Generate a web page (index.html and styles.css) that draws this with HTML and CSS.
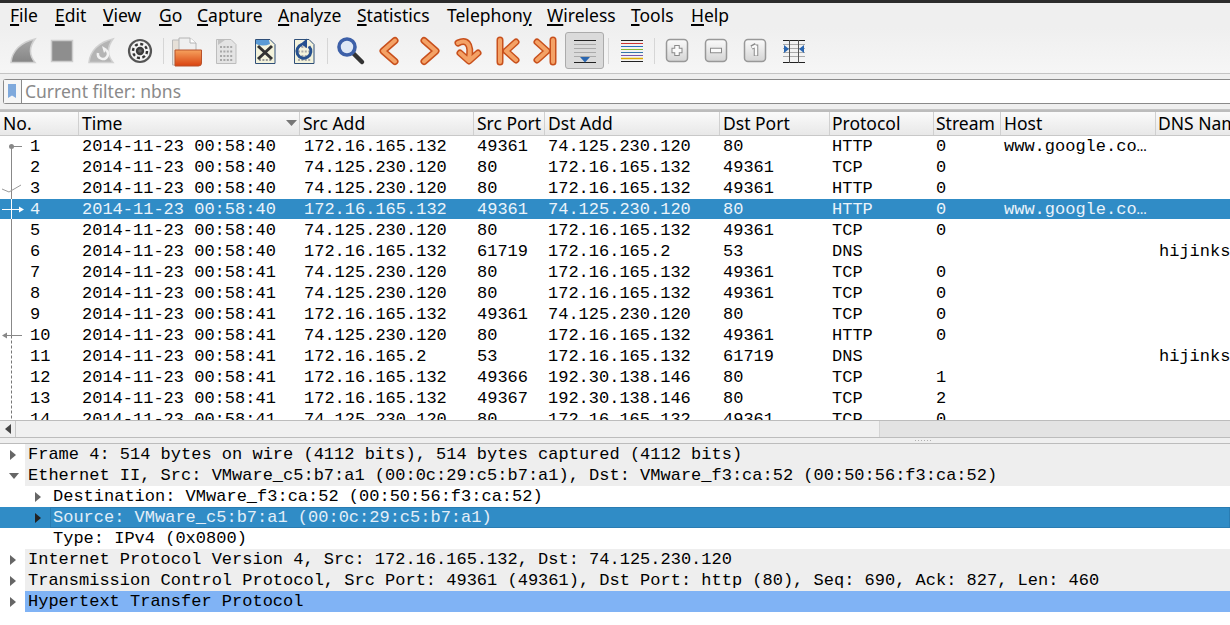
FILE: index.html
```html
<!DOCTYPE html>
<html lang="en">
<head>
<meta charset="utf-8">
<title>Wireshark</title>
<link rel="stylesheet" href="styles.css">
</head>
<body>
<svg class="defs">
	<defs>
		<linearGradient id="finfill" x1="0" y1="0" x2="0" y2="1"><stop offset="0" stop-color="#a8a8a8"/><stop offset="1" stop-color="#858585"/></linearGradient>
		<linearGradient id="folderfill" x1="0" y1="0" x2="0" y2="1"><stop offset="0" stop-color="#f6a25e"/><stop offset="1" stop-color="#d9420f"/></linearGradient>
		<linearGradient id="keyfill" x1="0" y1="0" x2="0" y2="1"><stop offset="0" stop-color="#fbfbfb"/><stop offset="1" stop-color="#d4d4d4"/></linearGradient>
	</defs>
</svg>
<div class="topedge"></div>
<div class="menubar">
	<span class="m1"><u>F</u>ile</span>
	<span class="m2"><u>E</u>dit</span>
	<span class="m3"><u>V</u>iew</span>
	<span class="m4"><u>G</u>o</span>
	<span class="m5"><u>C</u>apture</span>
	<span class="m6"><u>A</u>nalyze</span>
	<span class="m7"><u>S</u>tatistics</span>
	<span class="m8">Telephon<u>y</u></span>
	<span class="m9"><u>W</u>ireless</span>
	<span class="m10"><u>T</u>ools</span>
	<span class="m11"><u>H</u>elp</span>
</div>
<div class="toolbar">
	<div class="tool"><svg viewBox="0 0 32 32"><path d="M4 27.500C5 16 14 7 28 4C22 12 22 20 28 27.500Z" fill="url(#finfill)" stroke="#d0d0d0" stroke-width="1.500"/></svg></div>
	<div class="tool"><svg viewBox="0 0 32 32"><rect x="5.500" y="5.500" width="21" height="21" fill="#8e8e8e" stroke="#cdcdcd" stroke-width="1.500"/></svg></div>
	<div class="tool"><svg viewBox="0 0 32 32"><path d="M4 27.500C5 16 14 7 28 4C22 12 22 20 28 27.500Z" fill="#b4b4b4" stroke="#d0d0d0" stroke-width="1.500"/><path d="M13 18a5 5 0 1 0 8-3" fill="none" stroke="#f2f2f2" stroke-width="2.600"/><path d="M17 11l5 3-3 4z" fill="#f2f2f2"/></svg></div>
	<div class="tool"><svg viewBox="0 0 32 32"><circle cx="16" cy="16" r="11" fill="#f4f4f4" stroke="#555" stroke-width="2.200"/><circle cx="16" cy="16" r="7" fill="none" stroke="#333" stroke-width="2.400" stroke-dasharray="3 2.500"/><circle cx="16" cy="16" r="4.200" fill="#3c3c3c"/><circle cx="16" cy="16" r="1.800" fill="#666"/></svg></div>
	<div class="sep"></div>
	<div class="tool"><svg viewBox="0 0 32 32">
		<path d="M1.500 5H9V30H1.500Z" fill="#e6e0d8" stroke="#bbb"/>
		<path d="M8 3H19L25 8V18H8Z" fill="#efefef" stroke="#b4b4b4"/>
		<path d="M19 3V8H25" fill="#fff" stroke="#b4b4b4"/>
		<path d="M4 15H30.500V28Q30.500 31 27.500 31H4Z" fill="url(#folderfill)" stroke="#b9522a"/>
	</svg></div>
	<div class="tool"><svg viewBox="0 0 32 32"><path d="M6.500 4.500H21L26 9.500V28.500H6.500Z" fill="#e4e4e4" stroke="#bdbdbd"/><path d="M10 12H23M10 16.500H23M10 21H23M10 25H23" stroke="#a8a8a8" stroke-width="2" stroke-dasharray="2 1.400"/><path d="M8 5H15L8 10Z" fill="#c2c2c2"/></svg></div>
	<div class="tool"><svg viewBox="0 0 32 32"><path d="M6.500 4.500H21L26 9.500V28.500H6.500Z" fill="#f4f3dc" stroke="#2f4f78"/><path d="M7 5H20L21 9Q14 12 7 9Z" fill="#5b9bd5"/><path d="M10 25H23" stroke="#999" stroke-width="2" stroke-dasharray="2 1.400"/><path d="M9 11L23 24M23 11L9 24" stroke="#333" stroke-width="3"/></svg></div>
	<div class="tool"><svg viewBox="0 0 32 32"><path d="M6.500 4.500H21L26 9.500V28.500H6.500Z" fill="#f4f3dc" stroke="#2f4f78"/><path d="M10 12H23M10 16.500H23M10 21H23M10 25H23" stroke="#aaa" stroke-width="2" stroke-dasharray="2 1.400"/><path d="M14 9.500a7 7 0 1 0 7 2" fill="none" stroke="#27518f" stroke-width="3"/><path d="M19 3.500V13L12.500 9Z" fill="#27518f"/></svg></div>
	<div class="sep"></div>
	<div class="tool"><svg viewBox="0 0 32 32"><path d="M18 18L27 27" stroke="#333" stroke-width="4.500" stroke-linecap="round"/><circle cx="12" cy="12" r="8" fill="#dfe8f5" stroke="#3d60a8" stroke-width="3.600"/></svg></div>
	<div class="tool"><svg viewBox="0 0 32 32"><path class="ar-o" d="M21 5.500L9 16L21 26.500"/><path class="ar-i" d="M21 5.500L9 16L21 26.500"/></svg></div>
	<div class="tool"><svg viewBox="0 0 32 32"><path class="ar-o" d="M11 5.500L23 16L11 26.500"/><path class="ar-i" d="M11 5.500L23 16L11 26.500"/></svg></div>
	<div class="tool"><svg viewBox="0 0 32 32"><path class="ar-o" d="M6 8C14 4 20 8 17 24M8 18L17 26L26 18"/><path class="ar-i" d="M6 8C14 4 20 8 17 24M8 18L17 26L26 18"/></svg></div>
	<div class="tool"><svg viewBox="0 0 32 32"><path class="ar-o" d="M9 5V27M25 7L15 16L25 25"/><path class="ar-i" d="M9 5V27M25 7L15 16L25 25"/></svg></div>
	<div class="tool"><svg viewBox="0 0 32 32"><path class="ar-o" d="M23 5V27M7 7L17 16L7 25"/><path class="ar-i" d="M23 5V27M7 7L17 16L7 25"/></svg></div>
	<div class="tool on"><svg viewBox="0 0 32 32"><path d="M5 5.500H27M5 27.500H27" stroke="#222" stroke-width="1"/><path d="M5 9.500H27M5 13.500H27M5 17.500H27M5 21.500H27" stroke="#aaa" stroke-width="1"/><path d="M11 22H21L16 27.500Z" fill="#2a66b0"/></svg></div>
	<div class="sep"></div>
	<div class="tool"><svg viewBox="0 0 32 32">
		<path d="M5 5.500H27" stroke="#222"/><path d="M5 8.500H27" stroke="#c33"/><path d="M5 11.500H27" stroke="#2a6fc0"/><path d="M5 14.500H27" stroke="#8b3"/><path d="M5 17.500H27" stroke="#37a"/><path d="M5 20.500H27" stroke="#75a"/><path d="M5 23.500H27" stroke="#da0" stroke-width="1.500"/><path d="M5 26.500H27" stroke="#222"/>
	</svg></div>
	<div class="sep narrow"></div>
	<div class="tool"><svg viewBox="0 0 32 32"><rect class="key" x="5.500" y="4.500" width="21" height="22" rx="3.500"/><path d="M16 10V21M10.500 15.500H21.500" stroke="#8a8a8a" stroke-width="5.500"/><path d="M16 11V20M11.500 15.500H20.500" stroke="#fafafa" stroke-width="3.500"/></svg></div>
	<div class="tool"><svg viewBox="0 0 32 32"><rect class="key" x="5.500" y="4.500" width="21" height="22" rx="3.500"/><path d="M10 15.500H22" stroke="#8a8a8a" stroke-width="5.500"/><path d="M11 15.500H21" stroke="#fafafa" stroke-width="3.500"/></svg></div>
	<div class="tool"><svg viewBox="0 0 32 32"><rect class="key" x="5.500" y="4.500" width="21" height="22" rx="3.500"/><path d="M17 9.500V21M12.500 12.500L17 10" fill="none" stroke="#8a8a8a" stroke-width="4.500"/><path d="M17 10.500V20.500M13 12.500L17 10.500" fill="none" stroke="#fafafa" stroke-width="2.500"/></svg></div>
	<div class="tool"><svg viewBox="0 0 32 32"><path d="M5 5.500H27M5 27.500H27" stroke="#222"/><path d="M5 9.500H27M5 13.500H27M5 17.500H27M5 21.500H27" stroke="#aaa"/><path d="M11.500 5V28M20.500 5V28" stroke="#555"/><path d="M6 10L11 14L6 18Z M26 10L21 14L26 18Z" fill="#2a66b0"/></svg></div>
</div>
<div class="filterbar">
	<div class="filterbox">
		<div class="bookmark"><svg viewBox="0 0 9 15"><path d="M0 0H8V14L4 11.500L0 14Z" fill="#7fa9dc"/></svg></div>
		<div class="filtertext">Current filter: nbns</div>
	</div>
</div>
<div class="listhead">
	<div>No.</div>
	<div class="sorted">Time<svg viewBox="0 0 11 6"><path d="M0 0H11L5.500 6Z" fill="#777"/></svg></div>
	<div>Src Add</div>
	<div>Src Port</div>
	<div>Dst Add</div>
	<div>Dst Port</div>
	<div class="c-proto">Protocol</div>
	<div class="c-stream">Stream</div>
	<div>Host</div>
	<div class="c-dns">DNS Nam</div>
</div>
<div class="list">
	<svg class="graph" width="30" height="284" viewBox="0 0 30 284">
		<path d="M11.500 10.500V63" stroke="#888" fill="none"/>
		<path d="M11.500 73V199.500" stroke="#888" fill="none"/>
		<path d="M11.500 199.500V284" stroke="#777" stroke-dasharray="3 2" fill="none"/>
		<circle cx="11.500" cy="10.500" r="2.500" fill="#888"/>
		<path d="M11.500 10.500H22" stroke="#888"/>
		<path d="M2 53L9 56L21 49" stroke="#999" fill="none"/>
		<path d="M11.500 63V83" stroke="#fff"/>
		<path d="M2 73.500H20" stroke="#fff"/>
		<path d="M19 70.500L24 73.500L19 76.500Z" fill="#fff"/>
		<path d="M4 199.500H22" stroke="#888"/>
		<path d="M7 196.500L2 199.500L7 202.500Z" fill="#888"/>
	</svg>
	<div class="pkt"><span class="num">1</span><span>2014-11-23 00:58:40</span><span>172.16.165.132</span><span>49361</span><span>74.125.230.120</span><span>80</span><span>HTTP</span><span>0</span><span>www.google.co…</span><span></span></div>
	<div class="pkt"><span class="num">2</span><span>2014-11-23 00:58:40</span><span>74.125.230.120</span><span>80</span><span>172.16.165.132</span><span>49361</span><span>TCP</span><span>0</span><span></span><span></span></div>
	<div class="pkt"><span class="num">3</span><span>2014-11-23 00:58:40</span><span>74.125.230.120</span><span>80</span><span>172.16.165.132</span><span>49361</span><span>HTTP</span><span>0</span><span></span><span></span></div>
	<div class="pkt sel"><span class="num">4</span><span>2014-11-23 00:58:40</span><span>172.16.165.132</span><span>49361</span><span>74.125.230.120</span><span>80</span><span>HTTP</span><span>0</span><span>www.google.co…</span><span></span></div>
	<div class="pkt"><span class="num">5</span><span>2014-11-23 00:58:40</span><span>74.125.230.120</span><span>80</span><span>172.16.165.132</span><span>49361</span><span>TCP</span><span>0</span><span></span><span></span></div>
	<div class="pkt"><span class="num">6</span><span>2014-11-23 00:58:40</span><span>172.16.165.132</span><span>61719</span><span>172.16.165.2</span><span>53</span><span>DNS</span><span></span><span></span><span>hijinks</span></div>
	<div class="pkt"><span class="num">7</span><span>2014-11-23 00:58:41</span><span>74.125.230.120</span><span>80</span><span>172.16.165.132</span><span>49361</span><span>TCP</span><span>0</span><span></span><span></span></div>
	<div class="pkt"><span class="num">8</span><span>2014-11-23 00:58:41</span><span>74.125.230.120</span><span>80</span><span>172.16.165.132</span><span>49361</span><span>TCP</span><span>0</span><span></span><span></span></div>
	<div class="pkt"><span class="num">9</span><span>2014-11-23 00:58:41</span><span>172.16.165.132</span><span>49361</span><span>74.125.230.120</span><span>80</span><span>TCP</span><span>0</span><span></span><span></span></div>
	<div class="pkt"><span class="num">10</span><span>2014-11-23 00:58:41</span><span>74.125.230.120</span><span>80</span><span>172.16.165.132</span><span>49361</span><span>HTTP</span><span>0</span><span></span><span></span></div>
	<div class="pkt"><span class="num">11</span><span>2014-11-23 00:58:41</span><span>172.16.165.2</span><span>53</span><span>172.16.165.132</span><span>61719</span><span>DNS</span><span></span><span></span><span>hijinks</span></div>
	<div class="pkt"><span class="num">12</span><span>2014-11-23 00:58:41</span><span>172.16.165.132</span><span>49366</span><span>192.30.138.146</span><span>80</span><span>TCP</span><span>1</span><span></span><span></span></div>
	<div class="pkt"><span class="num">13</span><span>2014-11-23 00:58:41</span><span>172.16.165.132</span><span>49367</span><span>192.30.138.146</span><span>80</span><span>TCP</span><span>2</span><span></span><span></span></div>
	<div class="pkt"><span class="num">14</span><span>2014-11-23 00:58:41</span><span>74.125.230.120</span><span>80</span><span>172.16.165.132</span><span>49361</span><span>TCP</span><span>0</span><span></span><span></span></div>
</div>
<div class="hscroll">
	<div class="hleft"><svg viewBox="0 0 6 10"><path d="M6 0V10L0 5Z" fill="#444"/></svg></div>
	<div class="hthumb"></div>
</div>
<div class="splitter"><span class="grip"></span></div>
<div class="details">
	<div class="node top"><i class="arrow"></i><span>Frame 4: 514 bytes on wire (4112 bits), 514 bytes captured (4112 bits)</span></div>
	<div class="node top"><i class="arrow open"></i><span>Ethernet II, Src: VMware_c5:b7:a1 (00:0c:29:c5:b7:a1), Dst: VMware_f3:ca:52 (00:50:56:f3:ca:52)</span></div>
	<div class="node child"><i class="arrow"></i><span>Destination: VMware_f3:ca:52 (00:50:56:f3:ca:52)</span></div>
	<div class="node child sel"><i class="arrow"></i><span>Source: VMware_c5:b7:a1 (00:0c:29:c5:b7:a1)</span></div>
	<div class="node child"><i class="noarrow"></i><span>Type: IPv4 (0x0800)</span></div>
	<div class="node top"><i class="arrow"></i><span>Internet Protocol Version 4, Src: 172.16.165.132, Dst: 74.125.230.120</span></div>
	<div class="node top"><i class="arrow"></i><span>Transmission Control Protocol, Src Port: 49361 (49361), Dst Port: http (80), Seq: 690, Ack: 827, Len: 460</span></div>
	<div class="node top http"><i class="arrow"></i><span>Hypertext Transfer Protocol</span></div>
</div>
</body>
</html>
```

FILE: styles.css
```css
* {
	margin: 0;
	padding: 0;
	box-sizing: border-box;
}
html, body {
	width: 1230px;
	height: 625px;
	overflow: hidden;
	background: #fff;
}
body {
	font-family: "Noto Sans", sans-serif;
	font-size: 17.5px;
	color: #000;
}
.defs {
	display: block;
	width: 0;
	height: 0;
}
.topedge {
	height: 3px;
	background: #2c2c2c;
}

/* menu */
.menubar {
	display: flex;
	height: 25px;
	padding-left: 10px;
	background: #efefef;
	line-height: 24px;
	white-space: nowrap;
}
.menubar span {
	display: block;
}
.menubar u {
	text-decoration-thickness: 2px;
	text-underline-offset: 2px;
}
.m1 { width: 45px; }
.m2 { width: 48px; }
.m3 { width: 56px; }
.m4 { width: 38px; }
.m5 { width: 81px; }
.m6 { width: 79px; }
.m7 { width: 90px; }
.m8 { width: 100px; }
.m9 { width: 84px; }
.m10 { width: 60px; }

/* toolbar */
.toolbar {
	display: flex;
	align-items: center;
	height: 46px;
	padding-left: 3px;
	background: linear-gradient(#efefef, #f6f6f6);
	border-bottom: 1px solid #c4c4c4;
}
.tool {
	display: flex;
	align-items: center;
	justify-content: center;
	flex: none;
	width: 39px;
	height: 37px;
}
.tool svg {
	width: 32px;
	height: 32px;
}
.tool.on {
	background: #dadada;
	border: 1px solid #ababab;
	border-radius: 3px;
}
.sep {
	flex: none;
	width: 1px;
	height: 26px;
	margin: 0 3.5px;
	background: #d6d6d6;
}
.sep.narrow {
	margin: 0 2.5px;
}
.ar-o, .ar-i {
	fill: none;
	stroke-linecap: round;
	stroke-linejoin: round;
}
.ar-o {
	stroke: #c8501c;
	stroke-width: 7;
}
.ar-i {
	stroke: #f4a266;
	stroke-width: 4;
}
.key {
	fill: url(#keyfill);
	stroke: #989898;
	stroke-width: 1.500;
}

/* filter */
.filterbar {
	height: 36px;
	padding: 5px 0 0 3px;
	background: #efefef;
	border-bottom: 1px solid #c4c4c4;
}
.filterbox {
	display: flex;
	height: 25px;
	background: #fff;
	border: 1px solid #8a8a8a;
	border-right: 0;
	border-radius: 3px 0 0 3px;
}
.bookmark {
	display: flex;
	align-items: center;
	justify-content: center;
	width: 18px;
	border-right: 1px solid #8a8a8a;
	background: #f6f6f6;
}
.bookmark svg {
	width: 9px;
	height: 15px;
}
.filtertext {
	padding-left: 3px;
	line-height: 22px;
	color: #8a8a8a;
}

/* packet list */
.listhead, .pkt {
	display: grid;
	grid-template-columns: 79px 221px 174px 71px 175px 110px 104px 67px 155px 74px;
}
.listhead {
	height: 26px;
	background: linear-gradient(#fafafa, #e8e8e8);
	border-top: 2px solid #bcbcbc;
	border-bottom: 1px solid #c8c8c8;
	line-height: 22px;
	white-space: nowrap;
}
.listhead div {
	padding-left: 3px;
	border-right: 1px solid #d0d0d0;
}
.sorted {
	display: flex;
	justify-content: space-between;
	align-items: flex-start;
}
.sorted svg {
	width: 11px;
	height: 6px;
	margin: 8px 2px 0 0;
}
.listhead .c-proto {
	padding-left: 2px;
}
.listhead .c-stream {
	padding-left: 2px;
}
.listhead .c-dns {
	padding-left: 2px;
	border-right: 0;
}
.list {
	position: relative;
	height: 284px;
	overflow: hidden;
	font-family: "Liberation Mono", monospace;
	font-size: 17px;
}
.pkt {
	height: 21px;
	line-height: 21px;
	white-space: pre;
}
.pkt span {
	padding-left: 3px;
}
.pkt .num {
	padding-left: 30px;
}
.pkt span:nth-child(3) {
	padding-left: 4px;
}
.pkt span:nth-child(7), .pkt span:nth-child(8) {
	padding-left: 2px;
}
.pkt.sel {
	background: #308cc6;
	background-clip: padding-box;
	border-bottom: 1px solid #fff;
	color: #eaf3fa;
}
.graph {
	position: absolute;
	left: 0;
	top: 0;
}

/* bottom of list */
.hscroll {
	display: flex;
	height: 18px;
	background: #e3e3e3;
	border-top: 1px solid #bcbcbc;
	border-bottom: 1px solid #bcbcbc;
}
.hleft {
	display: flex;
	align-items: center;
	justify-content: center;
	width: 16px;
	background: #efefef;
	border-right: 1px solid #c8c8c8;
}
.hleft svg {
	width: 6px;
	height: 10px;
}
.hthumb {
	width: 864px;
	background: #f0f0f0;
	border-right: 1px solid #d4d4d4;
}
.splitter {
	display: flex;
	align-items: center;
	height: 6px;
	padding-left: 915px;
	background: #efefef;
	border-bottom: 1px solid #bcbcbc;
}
.grip {
	width: 16px;
	height: 1px;
	background: repeating-linear-gradient(90deg, #b0b0b0 0 1px, transparent 1px 3px);
}

/* packet details */
.details {
	font-family: "Liberation Mono", monospace;
	font-size: 17px;
}
.node {
	display: flex;
	align-items: center;
	height: 21px;
	line-height: 21px;
	white-space: pre;
}
.node span {
	flex: 1;
	height: 21px;
	padding-left: 3px;
}
.node i {
	flex: none;
	display: block;
}
.node.top i {
	width: 25px;
}
.node.child i {
	width: 50px;
}
.node.top span {
	background: #eeeeee;
}
.arrow {
	position: relative;
	height: 21px;
}
.arrow::after {
	content: "";
	position: absolute;
	right: 9px;
	top: 6px;
	border-left: 6px solid #666;
	border-top: 5px solid transparent;
	border-bottom: 5px solid transparent;
}
.arrow.open::after {
	right: 6px;
	top: 8px;
	border-top: 6px solid #666;
	border-left: 5px solid transparent;
	border-right: 5px solid transparent;
	border-bottom: 0;
}
.node.sel {
	background: #308cc6;
	color: #e2eef8;
}
.node.sel span {
	outline: 1px solid #2a7cb2;
	outline-offset: -1px;
}
.node.sel .arrow::after {
	border-left-color: #222;
}
.node.top.http span {
	background: #80b3f5;
}
```
